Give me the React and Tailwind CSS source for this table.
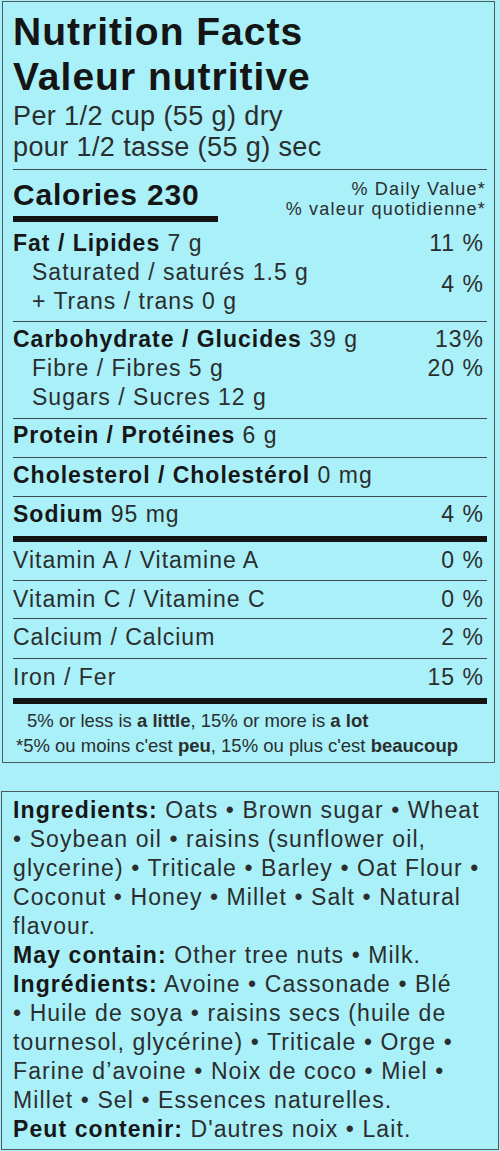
import React from 'react';

const Divider = () => <div className="h-px bg-[#3b4a4d]" />;
const ThickBar = () => <div className="h-[6px] bg-[#141414]" />;

const NutrientRow = ({ label, amount, value, className }) => (
  <div className={className}>
    <div className="flex justify-between pr-[3px]">
      <span>
        <span className="font-bold text-[#171717]">{label}</span> {amount}
      </span>
      <span>{value}</span>
    </div>
  </div>
);

const VitaminRow = ({ label, value, className }) => (
  <div className={className}>
    <div className="flex justify-between pr-[3px]">
      <span>{label}</span>
      <span>{value}</span>
    </div>
  </div>
);

const NutritionFacts = () => {
  return (
    <div className="ml-[2px] w-[493px] border border-[#4b5b5e] pl-[10px] pr-[7px]">
      {/* Title */}
      <div className="pt-[7px] text-[39px] leading-[45px] font-bold tracking-[1px] text-[#151515]">
        <div>Nutrition Facts</div>
        <div>Valeur nutritive</div>
      </div>
      <div className="mt-[2px] text-[27px] leading-[31px] tracking-[0.4px]">
        <div>Per 1/2 cup (55 g) dry</div>
        <div>pour 1/2 tasse (55 g) sec</div>
      </div>
      <div className="mt-[6px]">
        <Divider />
      </div>

      {/* Calories */}
      <div className="flex justify-between items-start pt-[8px]">
        <div>
          <div className="text-[30px] leading-[34px] font-bold tracking-[0.8px] text-[#151515]">Calories 230</div>
          <div className="mt-[4px] h-[6px] w-[205px] bg-[#141414]" />
        </div>
        <div className="mt-[1px] pr-px text-right text-[18px] leading-[20px] tracking-[1.2px]">
          <div>% Daily Value*</div>
          <div>% valeur quotidienne*</div>
        </div>
      </div>

      <div className="text-[23px] leading-[29px] tracking-[1px]">
        {/* Fat */}
        <div className="pt-[7px] pb-[5px]">
          <div className="flex justify-between pr-[3px]">
            <span>
              <span className="font-bold text-[#171717]">Fat / Lipides</span> 7 g
            </span>
            <span>11 %</span>
          </div>
          <div className="flex justify-between items-center pl-[19px] pr-[3px]">
            <div>
              <div>Saturated / saturés 1.5 g</div>
              <div>+ Trans / trans 0 g</div>
            </div>
            <span className="mb-[6px]">4 %</span>
          </div>
        </div>
        <Divider />

        {/* Carbohydrate */}
        <div className="pt-[3px] pb-[6px]">
          <div className="flex justify-between pr-[3px]">
            <span>
              <span className="font-bold text-[#171717]">Carbohydrate / Glucides</span> 39 g
            </span>
            <span>13%</span>
          </div>
          <div className="flex justify-between pl-[19px] pr-[3px]">
            <span>Fibre / Fibres 5 g</span>
            <span>20 %</span>
          </div>
          <div className="pl-[19px]">Sugars / Sucres 12 g</div>
        </div>
        <Divider />

        <NutrientRow className="pt-[2px] pb-[7px]" label="Protein / Protéines" amount="6 g" value="" />
        <Divider />
        <NutrientRow className="pt-[3px] pb-[6px]" label="Cholesterol / Cholestérol" amount="0 mg" value="" />
        <Divider />
        <NutrientRow className="pt-[3px] pb-[7px]" label="Sodium" amount="95 mg" value="4 %" />
        <ThickBar />

        <VitaminRow className="pt-[4px] pb-[5px]" label="Vitamin A / Vitamine A" value="0 %" />
        <Divider />
        <VitaminRow className="pt-[4px] pb-[4px]" label="Vitamin C / Vitamine C" value="0 %" />
        <Divider />
        <VitaminRow className="pt-[4px] pb-[6px]" label="Calcium / Calcium" value="2 %" />
        <Divider />
        <VitaminRow className="pt-[4px] pb-[6px]" label="Iron / Fer" value="15 %" />
        <ThickBar />
      </div>

      {/* Footnote */}
      <div className="pt-[4px] pb-[4px] text-[18.5px] leading-[25px] whitespace-nowrap">
        <div className="pl-[14px]">
          5% or less is <span className="font-bold">a little</span>, 15% or more is <span className="font-bold">a lot</span>
        </div>
        <div className="pl-[3px]">
          *5% ou moins c'est <span className="font-bold">peu</span>, 15% ou plus c'est{' '}
          <span className="font-bold">beaucoup</span>
        </div>
      </div>
    </div>
  );
};

const Ingredients = () => {
  return (
    <div className="ml-px mt-[28px] w-[498px] border border-[#4b5b5e] pl-[11px] pt-[4px] pb-[5px] text-[23px] leading-[29px] tracking-[1.1px] whitespace-nowrap">
      <div>
        <span className="font-bold text-[#171717]">Ingredients:</span> Oats • Brown sugar • Wheat
      </div>
      <div>• Soybean oil • raisins (sunflower oil,</div>
      <div>glycerine) • Triticale • Barley • Oat Flour •</div>
      <div>Coconut • Honey • Millet • Salt • Natural</div>
      <div>flavour.</div>
      <div>
        <span className="font-bold text-[#171717]">May contain:</span> Other tree nuts • Milk.
      </div>
      <div>
        <span className="font-bold text-[#171717]">Ingrédients:</span> Avoine • Cassonade • Blé
      </div>
      <div>• Huile de soya • raisins secs (huile de</div>
      <div>tournesol, glycérine) • Triticale • Orge •</div>
      <div>Farine d’avoine • Noix de coco • Miel •</div>
      <div>Millet • Sel • Essences naturelles.</div>
      <div>
        <span className="font-bold text-[#171717]">Peut contenir:</span> D'autres noix • Lait.
      </div>
    </div>
  );
};

export default function App() {
  return (
    <div className="min-h-[1151px] bg-[#aaf0f8] pt-px font-['Liberation_Sans',Arial,sans-serif] text-[#2a2e2f]">
      <NutritionFacts />
      <Ingredients />
    </div>
  );
}
